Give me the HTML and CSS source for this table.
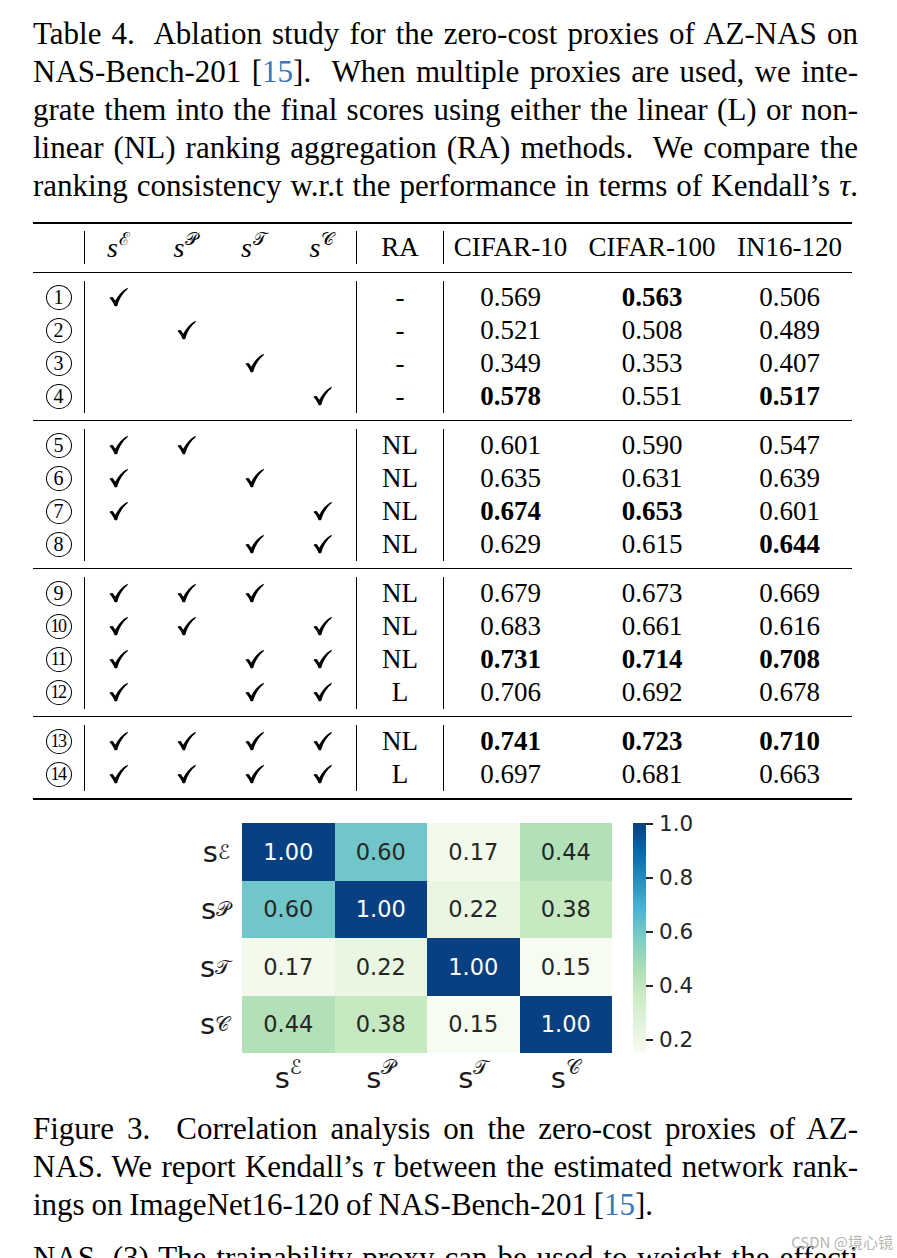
FILE: index.html
```html
<!DOCTYPE html>
<html>
<head>
<meta charset="utf-8">
<link rel="stylesheet" href="styles.css">
</head>
<body>
<div class="page">
  <div class="caption">
    <span class="ln">Table 4.&nbsp; Ablation study for the zero-cost proxies of AZ-NAS on</span>
    <span class="ln">NAS-Bench-201 [<span class="cite">15</span>].&nbsp; When multiple proxies are used, we inte-</span>
    <span class="ln">grate them into the final scores using either the linear (L) or non-</span>
    <span class="ln">linear (NL) ranking aggregation (RA) methods.&nbsp; We compare the</span>
    <span class="ln">ranking consistency w.r.t the performance in terms of Kendall’s <i class="tau">τ</i>.</span>
  </div>

  <div class="tbl">
    <div class="grp head">
      <div class="c"></div>
      <div class="c vl"><span class="m">s<sup>ℰ</sup></span></div>
      <div class="c"><span class="m">s<sup>𝒫</sup></span></div>
      <div class="c"><span class="m">s<sup>𝒯</sup></span></div>
      <div class="c"><span class="m">s<sup>𝒞</sup></span></div>
      <div class="c vl">RA</div>
      <div class="c vl">CIFAR-10</div>
      <div class="c">CIFAR-100</div>
      <div class="c">IN16-120</div>
    </div>

    <div class="grp">
      <div class="c"><span class="circ">1</span></div>
      <div class="c vl"><svg class="ck" viewBox="0 0 20 20"><path d="M0.5 11C2 9.5 4 9.8 5 11.5L6.6 14C9.5 8.5 13.5 3.5 19.5 0.3L19.8 1.6C14.5 5.8 10.8 12 8.6 19.4C8 19.9 6.4 20 5.8 19.4C4.6 16.2 2.8 13.2 0.5 11Z"/></svg></div>
      <div class="c"></div><div class="c"></div><div class="c"></div>
      <div class="c vl">-</div>
      <div class="c vl">0.569</div><div class="c b">0.563</div><div class="c">0.506</div>

      <div class="c"><span class="circ">2</span></div>
      <div class="c vl"></div>
      <div class="c"><svg class="ck" viewBox="0 0 20 20"><path d="M0.5 11C2 9.5 4 9.8 5 11.5L6.6 14C9.5 8.5 13.5 3.5 19.5 0.3L19.8 1.6C14.5 5.8 10.8 12 8.6 19.4C8 19.9 6.4 20 5.8 19.4C4.6 16.2 2.8 13.2 0.5 11Z"/></svg></div>
      <div class="c"></div><div class="c"></div>
      <div class="c vl">-</div>
      <div class="c vl">0.521</div><div class="c">0.508</div><div class="c">0.489</div>

      <div class="c"><span class="circ">3</span></div>
      <div class="c vl"></div><div class="c"></div>
      <div class="c"><svg class="ck" viewBox="0 0 20 20"><path d="M0.5 11C2 9.5 4 9.8 5 11.5L6.6 14C9.5 8.5 13.5 3.5 19.5 0.3L19.8 1.6C14.5 5.8 10.8 12 8.6 19.4C8 19.9 6.4 20 5.8 19.4C4.6 16.2 2.8 13.2 0.5 11Z"/></svg></div>
      <div class="c"></div>
      <div class="c vl">-</div>
      <div class="c vl">0.349</div><div class="c">0.353</div><div class="c">0.407</div>

      <div class="c"><span class="circ">4</span></div>
      <div class="c vl"></div><div class="c"></div><div class="c"></div>
      <div class="c"><svg class="ck" viewBox="0 0 20 20"><path d="M0.5 11C2 9.5 4 9.8 5 11.5L6.6 14C9.5 8.5 13.5 3.5 19.5 0.3L19.8 1.6C14.5 5.8 10.8 12 8.6 19.4C8 19.9 6.4 20 5.8 19.4C4.6 16.2 2.8 13.2 0.5 11Z"/></svg></div>
      <div class="c vl">-</div>
      <div class="c vl b">0.578</div><div class="c">0.551</div><div class="c b">0.517</div>
    </div>

    <div class="grp">
      <div class="c"><span class="circ">5</span></div>
      <div class="c vl"><svg class="ck" viewBox="0 0 20 20"><path d="M0.5 11C2 9.5 4 9.8 5 11.5L6.6 14C9.5 8.5 13.5 3.5 19.5 0.3L19.8 1.6C14.5 5.8 10.8 12 8.6 19.4C8 19.9 6.4 20 5.8 19.4C4.6 16.2 2.8 13.2 0.5 11Z"/></svg></div>
      <div class="c"><svg class="ck" viewBox="0 0 20 20"><path d="M0.5 11C2 9.5 4 9.8 5 11.5L6.6 14C9.5 8.5 13.5 3.5 19.5 0.3L19.8 1.6C14.5 5.8 10.8 12 8.6 19.4C8 19.9 6.4 20 5.8 19.4C4.6 16.2 2.8 13.2 0.5 11Z"/></svg></div>
      <div class="c"></div><div class="c"></div>
      <div class="c vl">NL</div>
      <div class="c vl">0.601</div><div class="c">0.590</div><div class="c">0.547</div>

      <div class="c"><span class="circ">6</span></div>
      <div class="c vl"><svg class="ck" viewBox="0 0 20 20"><path d="M0.5 11C2 9.5 4 9.8 5 11.5L6.6 14C9.5 8.5 13.5 3.5 19.5 0.3L19.8 1.6C14.5 5.8 10.8 12 8.6 19.4C8 19.9 6.4 20 5.8 19.4C4.6 16.2 2.8 13.2 0.5 11Z"/></svg></div>
      <div class="c"></div>
      <div class="c"><svg class="ck" viewBox="0 0 20 20"><path d="M0.5 11C2 9.5 4 9.8 5 11.5L6.6 14C9.5 8.5 13.5 3.5 19.5 0.3L19.8 1.6C14.5 5.8 10.8 12 8.6 19.4C8 19.9 6.4 20 5.8 19.4C4.6 16.2 2.8 13.2 0.5 11Z"/></svg></div>
      <div class="c"></div>
      <div class="c vl">NL</div>
      <div class="c vl">0.635</div><div class="c">0.631</div><div class="c">0.639</div>

      <div class="c"><span class="circ">7</span></div>
      <div class="c vl"><svg class="ck" viewBox="0 0 20 20"><path d="M0.5 11C2 9.5 4 9.8 5 11.5L6.6 14C9.5 8.5 13.5 3.5 19.5 0.3L19.8 1.6C14.5 5.8 10.8 12 8.6 19.4C8 19.9 6.4 20 5.8 19.4C4.6 16.2 2.8 13.2 0.5 11Z"/></svg></div>
      <div class="c"></div><div class="c"></div>
      <div class="c"><svg class="ck" viewBox="0 0 20 20"><path d="M0.5 11C2 9.5 4 9.8 5 11.5L6.6 14C9.5 8.5 13.5 3.5 19.5 0.3L19.8 1.6C14.5 5.8 10.8 12 8.6 19.4C8 19.9 6.4 20 5.8 19.4C4.6 16.2 2.8 13.2 0.5 11Z"/></svg></div>
      <div class="c vl">NL</div>
      <div class="c vl b">0.674</div><div class="c b">0.653</div><div class="c">0.601</div>

      <div class="c"><span class="circ">8</span></div>
      <div class="c vl"></div><div class="c"></div>
      <div class="c"><svg class="ck" viewBox="0 0 20 20"><path d="M0.5 11C2 9.5 4 9.8 5 11.5L6.6 14C9.5 8.5 13.5 3.5 19.5 0.3L19.8 1.6C14.5 5.8 10.8 12 8.6 19.4C8 19.9 6.4 20 5.8 19.4C4.6 16.2 2.8 13.2 0.5 11Z"/></svg></div>
      <div class="c"><svg class="ck" viewBox="0 0 20 20"><path d="M0.5 11C2 9.5 4 9.8 5 11.5L6.6 14C9.5 8.5 13.5 3.5 19.5 0.3L19.8 1.6C14.5 5.8 10.8 12 8.6 19.4C8 19.9 6.4 20 5.8 19.4C4.6 16.2 2.8 13.2 0.5 11Z"/></svg></div>
      <div class="c vl">NL</div>
      <div class="c vl">0.629</div><div class="c">0.615</div><div class="c b">0.644</div>
    </div>

    <div class="grp">
      <div class="c"><span class="circ">9</span></div>
      <div class="c vl"><svg class="ck" viewBox="0 0 20 20"><path d="M0.5 11C2 9.5 4 9.8 5 11.5L6.6 14C9.5 8.5 13.5 3.5 19.5 0.3L19.8 1.6C14.5 5.8 10.8 12 8.6 19.4C8 19.9 6.4 20 5.8 19.4C4.6 16.2 2.8 13.2 0.5 11Z"/></svg></div>
      <div class="c"><svg class="ck" viewBox="0 0 20 20"><path d="M0.5 11C2 9.5 4 9.8 5 11.5L6.6 14C9.5 8.5 13.5 3.5 19.5 0.3L19.8 1.6C14.5 5.8 10.8 12 8.6 19.4C8 19.9 6.4 20 5.8 19.4C4.6 16.2 2.8 13.2 0.5 11Z"/></svg></div>
      <div class="c"><svg class="ck" viewBox="0 0 20 20"><path d="M0.5 11C2 9.5 4 9.8 5 11.5L6.6 14C9.5 8.5 13.5 3.5 19.5 0.3L19.8 1.6C14.5 5.8 10.8 12 8.6 19.4C8 19.9 6.4 20 5.8 19.4C4.6 16.2 2.8 13.2 0.5 11Z"/></svg></div>
      <div class="c"></div>
      <div class="c vl">NL</div>
      <div class="c vl">0.679</div><div class="c">0.673</div><div class="c">0.669</div>

      <div class="c"><span class="circ two">10</span></div>
      <div class="c vl"><svg class="ck" viewBox="0 0 20 20"><path d="M0.5 11C2 9.5 4 9.8 5 11.5L6.6 14C9.5 8.5 13.5 3.5 19.5 0.3L19.8 1.6C14.5 5.8 10.8 12 8.6 19.4C8 19.9 6.4 20 5.8 19.4C4.6 16.2 2.8 13.2 0.5 11Z"/></svg></div>
      <div class="c"><svg class="ck" viewBox="0 0 20 20"><path d="M0.5 11C2 9.5 4 9.8 5 11.5L6.6 14C9.5 8.5 13.5 3.5 19.5 0.3L19.8 1.6C14.5 5.8 10.8 12 8.6 19.4C8 19.9 6.4 20 5.8 19.4C4.6 16.2 2.8 13.2 0.5 11Z"/></svg></div>
      <div class="c"></div>
      <div class="c"><svg class="ck" viewBox="0 0 20 20"><path d="M0.5 11C2 9.5 4 9.8 5 11.5L6.6 14C9.5 8.5 13.5 3.5 19.5 0.3L19.8 1.6C14.5 5.8 10.8 12 8.6 19.4C8 19.9 6.4 20 5.8 19.4C4.6 16.2 2.8 13.2 0.5 11Z"/></svg></div>
      <div class="c vl">NL</div>
      <div class="c vl">0.683</div><div class="c">0.661</div><div class="c">0.616</div>

      <div class="c"><span class="circ two">11</span></div>
      <div class="c vl"><svg class="ck" viewBox="0 0 20 20"><path d="M0.5 11C2 9.5 4 9.8 5 11.5L6.6 14C9.5 8.5 13.5 3.5 19.5 0.3L19.8 1.6C14.5 5.8 10.8 12 8.6 19.4C8 19.9 6.4 20 5.8 19.4C4.6 16.2 2.8 13.2 0.5 11Z"/></svg></div>
      <div class="c"></div>
      <div class="c"><svg class="ck" viewBox="0 0 20 20"><path d="M0.5 11C2 9.5 4 9.8 5 11.5L6.6 14C9.5 8.5 13.5 3.5 19.5 0.3L19.8 1.6C14.5 5.8 10.8 12 8.6 19.4C8 19.9 6.4 20 5.8 19.4C4.6 16.2 2.8 13.2 0.5 11Z"/></svg></div>
      <div class="c"><svg class="ck" viewBox="0 0 20 20"><path d="M0.5 11C2 9.5 4 9.8 5 11.5L6.6 14C9.5 8.5 13.5 3.5 19.5 0.3L19.8 1.6C14.5 5.8 10.8 12 8.6 19.4C8 19.9 6.4 20 5.8 19.4C4.6 16.2 2.8 13.2 0.5 11Z"/></svg></div>
      <div class="c vl">NL</div>
      <div class="c vl b">0.731</div><div class="c b">0.714</div><div class="c b">0.708</div>

      <div class="c"><span class="circ two">12</span></div>
      <div class="c vl"><svg class="ck" viewBox="0 0 20 20"><path d="M0.5 11C2 9.5 4 9.8 5 11.5L6.6 14C9.5 8.5 13.5 3.5 19.5 0.3L19.8 1.6C14.5 5.8 10.8 12 8.6 19.4C8 19.9 6.4 20 5.8 19.4C4.6 16.2 2.8 13.2 0.5 11Z"/></svg></div>
      <div class="c"></div>
      <div class="c"><svg class="ck" viewBox="0 0 20 20"><path d="M0.5 11C2 9.5 4 9.8 5 11.5L6.6 14C9.5 8.5 13.5 3.5 19.5 0.3L19.8 1.6C14.5 5.8 10.8 12 8.6 19.4C8 19.9 6.4 20 5.8 19.4C4.6 16.2 2.8 13.2 0.5 11Z"/></svg></div>
      <div class="c"><svg class="ck" viewBox="0 0 20 20"><path d="M0.5 11C2 9.5 4 9.8 5 11.5L6.6 14C9.5 8.5 13.5 3.5 19.5 0.3L19.8 1.6C14.5 5.8 10.8 12 8.6 19.4C8 19.9 6.4 20 5.8 19.4C4.6 16.2 2.8 13.2 0.5 11Z"/></svg></div>
      <div class="c vl">L</div>
      <div class="c vl">0.706</div><div class="c">0.692</div><div class="c">0.678</div>
    </div>

    <div class="grp">
      <div class="c"><span class="circ two">13</span></div>
      <div class="c vl"><svg class="ck" viewBox="0 0 20 20"><path d="M0.5 11C2 9.5 4 9.8 5 11.5L6.6 14C9.5 8.5 13.5 3.5 19.5 0.3L19.8 1.6C14.5 5.8 10.8 12 8.6 19.4C8 19.9 6.4 20 5.8 19.4C4.6 16.2 2.8 13.2 0.5 11Z"/></svg></div>
      <div class="c"><svg class="ck" viewBox="0 0 20 20"><path d="M0.5 11C2 9.5 4 9.8 5 11.5L6.6 14C9.5 8.5 13.5 3.5 19.5 0.3L19.8 1.6C14.5 5.8 10.8 12 8.6 19.4C8 19.9 6.4 20 5.8 19.4C4.6 16.2 2.8 13.2 0.5 11Z"/></svg></div>
      <div class="c"><svg class="ck" viewBox="0 0 20 20"><path d="M0.5 11C2 9.5 4 9.8 5 11.5L6.6 14C9.5 8.5 13.5 3.5 19.5 0.3L19.8 1.6C14.5 5.8 10.8 12 8.6 19.4C8 19.9 6.4 20 5.8 19.4C4.6 16.2 2.8 13.2 0.5 11Z"/></svg></div>
      <div class="c"><svg class="ck" viewBox="0 0 20 20"><path d="M0.5 11C2 9.5 4 9.8 5 11.5L6.6 14C9.5 8.5 13.5 3.5 19.5 0.3L19.8 1.6C14.5 5.8 10.8 12 8.6 19.4C8 19.9 6.4 20 5.8 19.4C4.6 16.2 2.8 13.2 0.5 11Z"/></svg></div>
      <div class="c vl">NL</div>
      <div class="c vl b">0.741</div><div class="c b">0.723</div><div class="c b">0.710</div>

      <div class="c"><span class="circ two">14</span></div>
      <div class="c vl"><svg class="ck" viewBox="0 0 20 20"><path d="M0.5 11C2 9.5 4 9.8 5 11.5L6.6 14C9.5 8.5 13.5 3.5 19.5 0.3L19.8 1.6C14.5 5.8 10.8 12 8.6 19.4C8 19.9 6.4 20 5.8 19.4C4.6 16.2 2.8 13.2 0.5 11Z"/></svg></div>
      <div class="c"><svg class="ck" viewBox="0 0 20 20"><path d="M0.5 11C2 9.5 4 9.8 5 11.5L6.6 14C9.5 8.5 13.5 3.5 19.5 0.3L19.8 1.6C14.5 5.8 10.8 12 8.6 19.4C8 19.9 6.4 20 5.8 19.4C4.6 16.2 2.8 13.2 0.5 11Z"/></svg></div>
      <div class="c"><svg class="ck" viewBox="0 0 20 20"><path d="M0.5 11C2 9.5 4 9.8 5 11.5L6.6 14C9.5 8.5 13.5 3.5 19.5 0.3L19.8 1.6C14.5 5.8 10.8 12 8.6 19.4C8 19.9 6.4 20 5.8 19.4C4.6 16.2 2.8 13.2 0.5 11Z"/></svg></div>
      <div class="c"><svg class="ck" viewBox="0 0 20 20"><path d="M0.5 11C2 9.5 4 9.8 5 11.5L6.6 14C9.5 8.5 13.5 3.5 19.5 0.3L19.8 1.6C14.5 5.8 10.8 12 8.6 19.4C8 19.9 6.4 20 5.8 19.4C4.6 16.2 2.8 13.2 0.5 11Z"/></svg></div>
      <div class="c vl">L</div>
      <div class="c vl">0.697</div><div class="c">0.681</div><div class="c">0.663</div>
    </div>
  </div>

  <div class="fig">
    <div class="ylab">
      <span class="lab">s<sup>ℰ</sup></span>
      <span class="lab">s<sup>𝒫</sup></span>
      <span class="lab">s<sup>𝒯</sup></span>
      <span class="lab">s<sup>𝒞</sup></span>
    </div>
    <div class="hm-col">
      <div class="hm">
        <span class="v100">1.00</span><span class="v60">0.60</span><span class="v17">0.17</span><span class="v44">0.44</span>
        <span class="v60">0.60</span><span class="v100">1.00</span><span class="v22">0.22</span><span class="v38">0.38</span>
        <span class="v17">0.17</span><span class="v22">0.22</span><span class="v100">1.00</span><span class="v15">0.15</span>
        <span class="v44">0.44</span><span class="v38">0.38</span><span class="v15">0.15</span><span class="v100">1.00</span>
      </div>
      <div class="xlab">
        <span class="lab">s<sup>ℰ</sup></span>
        <span class="lab">s<sup>𝒫</sup></span>
        <span class="lab">s<sup>𝒯</sup></span>
        <span class="lab">s<sup>𝒞</sup></span>
      </div>
    </div>
    <div class="cbar"></div>
    <div class="ticks">
      <div class="tick"><span class="tk"><i class="mark"></i>1.0</span></div>
      <div class="tick"><span class="tk"><i class="mark"></i>0.8</span></div>
      <div class="tick"><span class="tk"><i class="mark"></i>0.6</span></div>
      <div class="tick"><span class="tk"><i class="mark"></i>0.4</span></div>
      <div class="tick"><span class="tk"><i class="mark"></i>0.2</span></div>
    </div>
  </div>

  <div class="caption figcap">
    <span class="ln">Figure 3.&nbsp; Correlation analysis on the zero-cost proxies of AZ-</span>
    <span class="ln">NAS. We report Kendall’s <i class="tau">τ</i> between the estimated network rank-</span>
    <span class="ln last">ings on ImageNet16-120 of NAS-Bench-201 [<span class="cite">15</span>].</span>
  </div>

  <div class="caption para">
    <span class="ln">NAS. (3) The trainability proxy can be used to weight the effecti</span>
  </div>

  <div class="wm">CSDN @境心镜</div>
</div>
</body>
</html>
```

FILE: styles.css
```css
html, body {
  margin: 0;
  height: 1258px;
  overflow: hidden;
  background: #fff;
}

body {
  color: #000;
  font-family: "Liberation Serif", "Times New Roman", serif;
}

.page {
  position: relative;
  width: 897px;
  height: 1258px;
  box-sizing: border-box;
  padding: 15px 39px 0 33px;
}

/* ---------- captions ---------- */
.caption {
  font-size: 31px;
  line-height: 38px;
  word-spacing: -1px;
}

.ln {
  display: block;
  text-align: justify;
  text-align-last: justify;
}

.ln.last {
  text-align-last: left;
}

.cite {
  color: #3a78b8;
}

.tau {
  font-style: italic;
}

/* ---------- table ---------- */
.tbl {
  margin-top: 17px;
  width: 819px;
  border-top: 2px solid #000;
  border-bottom: 2px solid #000;
  font-size: 27px;
}

.grp {
  display: grid;
  grid-template-columns: 51px 68px 68px 68px 68px 87px 134px 150px 125px;
  grid-auto-rows: 33px;
  padding: 7.5px 0;
}

.grp.head {
  padding: 7px 0 8px;
}

.grp + .grp {
  border-top: 1px solid #000;
}

.c {
  display: flex;
  align-items: center;
  justify-content: center;
}

.vl {
  border-left: 1px solid #000;
}

.b {
  font-weight: bold;
}

.m {
  font-style: italic;
  font-size: 28px;
}

.m sup {
  font-style: normal;
  font-size: 18px;
  line-height: 0;
  vertical-align: 12px;
  margin-left: 1px;
}

.circ {
  width: 26px;
  height: 25px;
  box-sizing: border-box;
  border: 1.4px solid #000;
  border-radius: 50%;
  display: flex;
  align-items: center;
  justify-content: center;
  font-size: 20px;
  line-height: 1;
}

.circ.two {
  font-size: 18px;
  letter-spacing: -1.5px;
  padding-right: 1px;
}

.ck {
  width: 19px;
  height: 20px;
  fill: #000;
}

/* ---------- heatmap figure ---------- */
.fig {
  display: flex;
  margin-top: 23px;
}

.lab {
  font-family: "DejaVu Sans", sans-serif;
  font-size: 29px;
  color: #1a1a1a;
}

.lab sup {
  font-size: 20px;
  line-height: 0;
  vertical-align: 14px;
}

.ylab {
  width: 209px;
  box-sizing: border-box;
  padding-right: 12px;
  display: grid;
  grid-auto-rows: 57.5px;
}

.ylab .lab {
  display: flex;
  align-items: center;
  justify-content: flex-end;
}

.hm {
  display: grid;
  grid-template-columns: repeat(4, 92.5px);
  grid-auto-rows: 57.5px;
  font-family: "DejaVu Sans", sans-serif;
  font-size: 22.5px;
  color: #262626;
}

.hm span {
  display: flex;
  align-items: center;
  justify-content: center;
}

.v100 { background: #084081; color: #fff; }
.v60  { background: #70c6c8; }
.v44  { background: #b2e1b9; }
.v38  { background: #c6e9c2; }
.v22  { background: #e8f6e2; }
.v17  { background: #f3faec; }
.v15  { background: #f7fcf0; }

.xlab {
  display: grid;
  grid-template-columns: repeat(4, 92.5px);
  height: 42px;
  align-items: end;
  justify-items: center;
}

.cbar {
  margin-left: 21px;
  width: 13px;
  height: 230px;
  background: linear-gradient(to top,
    #f7fcf0 0%, #e0f3db 12.5%, #ccebc5 25%, #a8ddb5 37.5%,
    #7bccc4 50%, #4eb3d3 62.5%, #2b8cbe 75%, #0868ac 87.5%, #084081 100%);
}

.ticks {
  display: flex;
  flex-direction: column;
  margin-top: -10px;
  font-family: "DejaVu Sans", sans-serif;
  font-size: 21.5px;
  color: #262626;
}

.tick {
  height: 54px;
}

.tk {
  display: flex;
  align-items: center;
  height: 22px;
  line-height: 22px;
}

.mark {
  display: block;
  width: 7px;
  height: 1.5px;
  background: #262626;
  margin-right: 6px;
}

/* ---------- lower text ---------- */
.figcap {
  margin-top: 15px;
}

.para {
  margin-top: 15px;
}

.wm {
  position: absolute;
  right: 4px;
  top: 1233px;
  font-family: "Noto Sans CJK SC", "DejaVu Sans", sans-serif;
  font-size: 15px;
  line-height: 18px;
  color: #b5b5b5;
}
```
